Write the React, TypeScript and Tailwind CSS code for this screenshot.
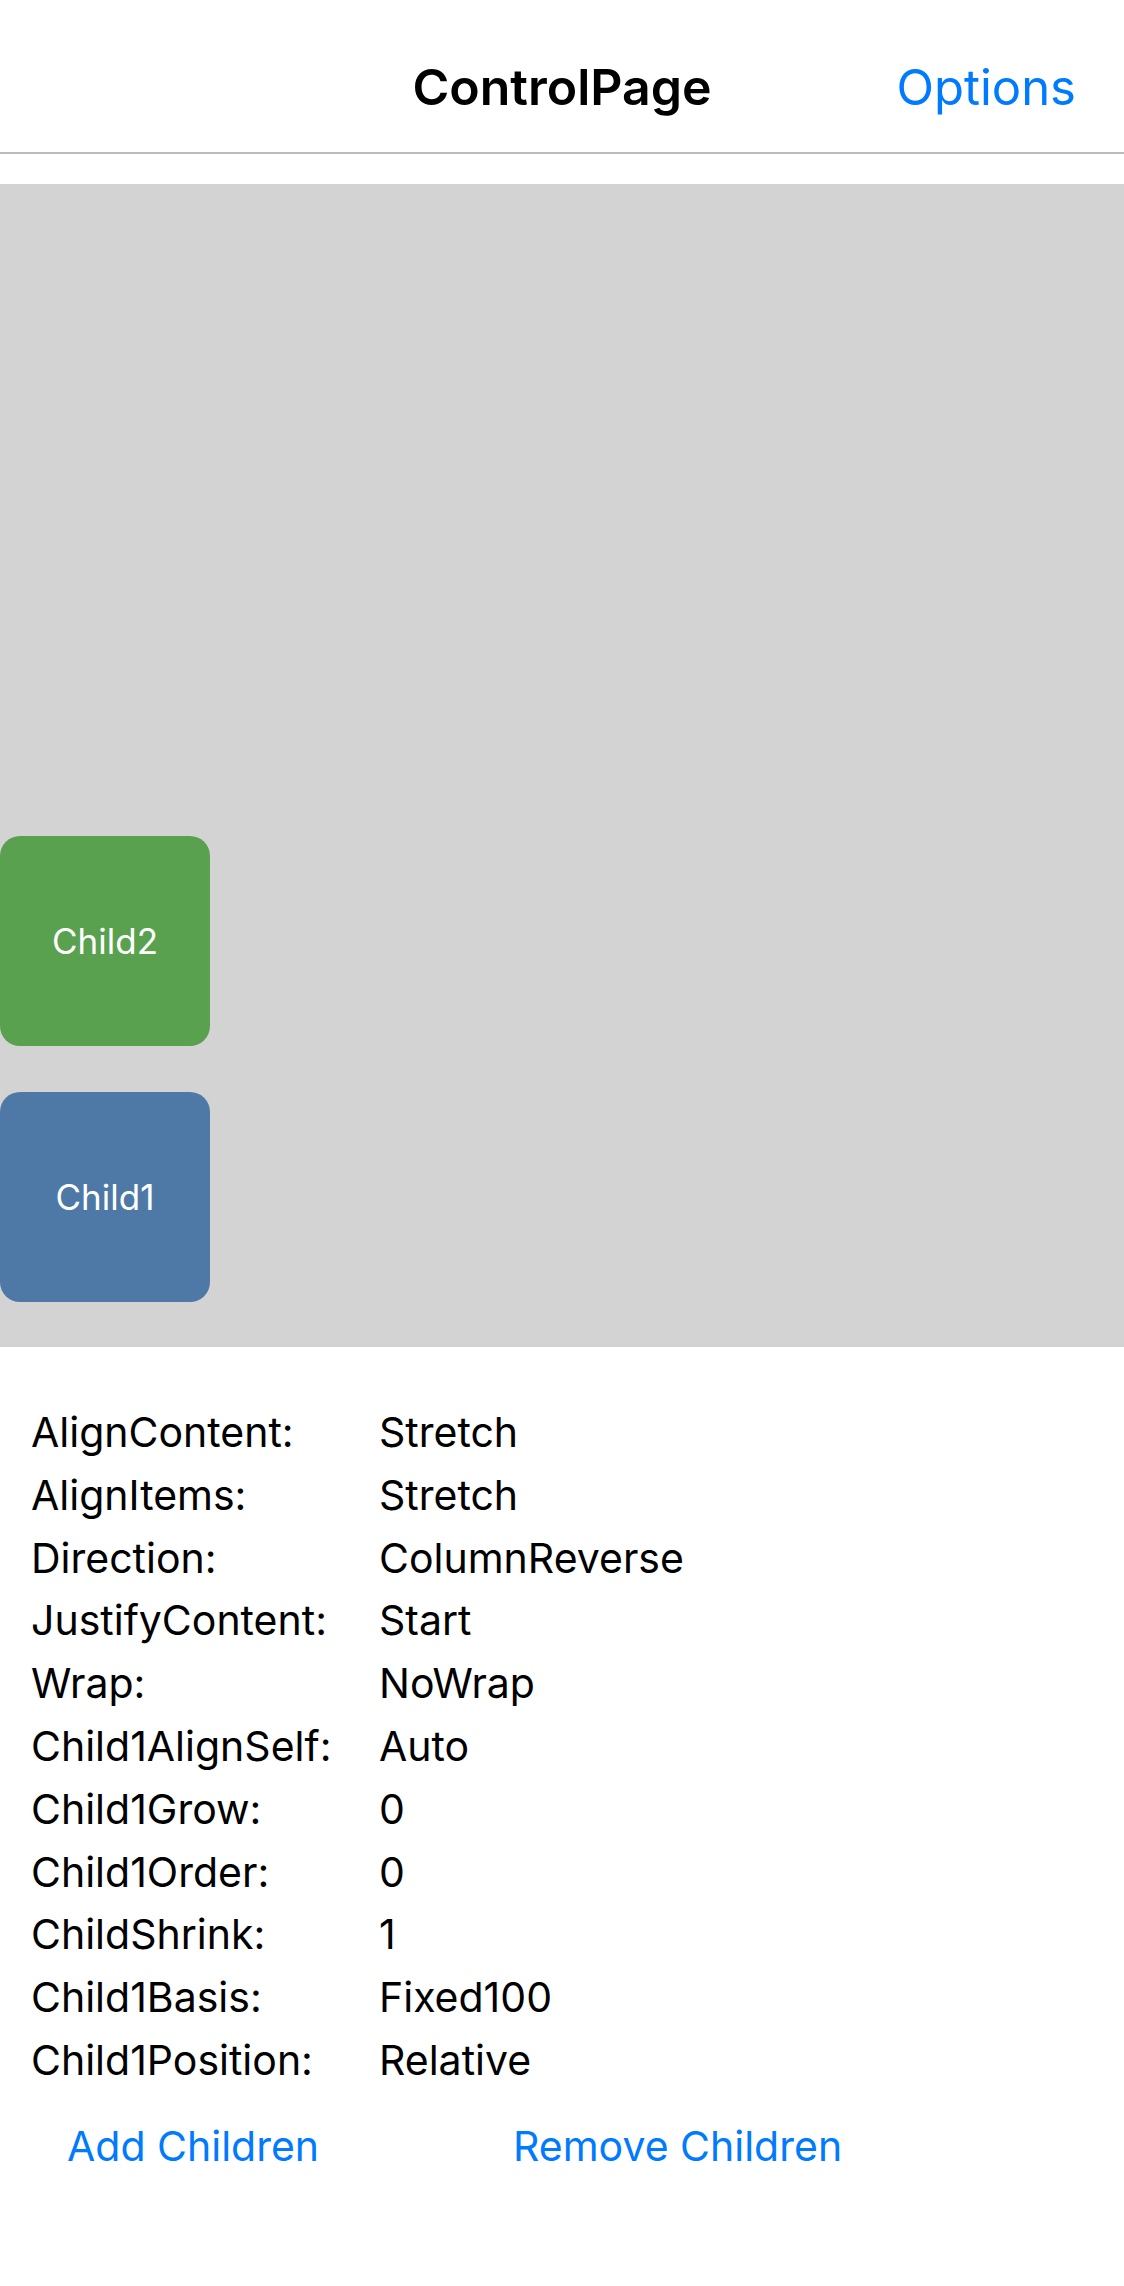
import React from 'react';

const settings: [string, string][] = [
  ['AlignContent:', 'Stretch'],
  ['AlignItems:', 'Stretch'],
  ['Direction:', 'ColumnReverse'],
  ['JustifyContent:', 'Start'],
  ['Wrap:', 'NoWrap'],
  ['Child1AlignSelf:', 'Auto'],
  ['Child1Grow:', '0'],
  ['Child1Order:', '0'],
  ['ChildShrink:', '1'],
  ['Child1Basis:', 'Fixed100'],
  ['Child1Position:', 'Relative'],
];

export default function App() {
  return (
    <div className="w-[1124px] min-h-[2286px] bg-white font-['Inter',sans-serif] text-black">
      {/* Nav bar */}
      <div className="grid grid-cols-[1fr_auto_1fr] items-center h-[154px] pt-[22px] border-b-2 border-[#bcbcbc]">
        <div />
        <div className="text-[50px] leading-none font-semibold">ControlPage</div>
        <div className="justify-self-end pr-[48px] text-[49px] leading-none text-[#007aff]">
          Options
        </div>
      </div>

      <div className="h-[30px]" />

      {/* Flex container preview */}
      <div className="h-[1163px] bg-[#d3d3d3] flex flex-col-reverse items-start">
        <div className="w-[210px] h-[210px] mb-[45px] rounded-[20px] bg-[#4e79a7] flex items-center justify-center text-white text-[35px]">
          Child1
        </div>
        <div className="w-[210px] h-[210px] mb-[46px] rounded-[20px] bg-[#59a14f] flex items-center justify-center text-white text-[35px]">
          Child2
        </div>
      </div>

      {/* Settings */}
      <div className="pt-[54px] px-[31px] grid grid-cols-[348px_1fr] text-[41px] leading-[62.8px]">
        {settings.map(([label, value]) => (
          <React.Fragment key={label}>
            <div>{label}</div>
            <div>{value}</div>
          </React.Fragment>
        ))}
      </div>

      <div className="flex mt-[23px] text-[41px] leading-[63px] text-[#007aff]">
        <div className="pl-[67px] w-[513px]">Add Children</div>
        <div>Remove Children</div>
      </div>
    </div>
  );
}
